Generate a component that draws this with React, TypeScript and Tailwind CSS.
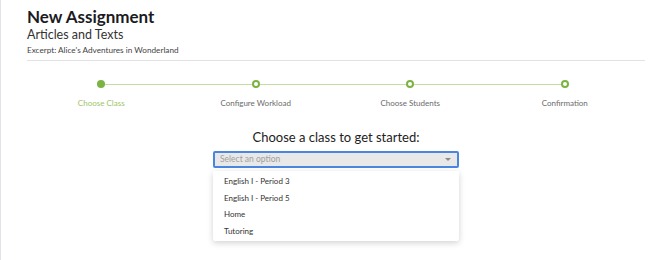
import React from 'react';

const steps = ['Choose Class', 'Configure Workload', 'Choose Students', 'Confirmation'];
const options = ['English I - Period 3', 'English I - Period 5', 'Home', 'Tutoring'];

const Stepper = () => (
  <div className="relative mt-[16px] ml-[-3px] mr-[3px] grid grid-cols-4">
    {/* connecting line between first and last dot */}
    <div className="absolute left-[12.5%] right-[12.5%] top-[7px] h-px bg-[#c5dda4]" />
    {steps.map((s, i) => (
      <div key={s} className="relative flex flex-col items-center">
        {i === 0 ? (
          <div className="h-[8px] w-[8px] mt-[3px] rounded-full bg-[#7cb342]" />
        ) : (
          <div className="h-[8px] w-[8px] mt-[3px] rounded-full border-2 border-[#7cb342] bg-white" />
        )}
        <span className={`mt-[10px] text-[8px] leading-[10px] ${i === 0 ? 'text-[#9bc46a]' : 'text-[#6b6b6b]'}`}>{s}</span>
      </div>
    ))}
  </div>
);

export default function App() {
  return (
    <div className="h-[260px] w-[670px] bg-white border-l border-[#e4e4e8]" style={{ fontFamily: 'Lato, "Noto Sans", sans-serif' }}>
      <div className="pl-[26px] pr-[25px] pt-[6px]">
        <h1 className="text-[17px] font-bold leading-[22px] text-[#1b1b1f]">New Assignment</h1>
        <h2 className="mt-[-1px] text-[12.5px] leading-[16px] text-[#333]">Articles and Texts</h2>
        <p className="mt-[1px] text-[8.2px] leading-[12px] text-[#444]">Excerpt: Alice's Adventures in Wonderland</p>
        <div className="mt-[4px] h-px bg-[#e2e2e2]" />

        <Stepper />

        <div className="mt-[21px] flex flex-col items-center">
          <div className="text-[13px] leading-[16px] text-[#222]">Choose a class to get started:</div>
          <div className="mt-[6px] w-[246px]">
            <div className="flex h-[17px] items-center justify-between rounded-[2px] border-2 border-[#4a86e0] bg-[#e8e8e8] pl-[5px] pr-[6px]">
              <span className="text-[8.5px] text-[#a0a0a0]">Select an option</span>
              <span className="h-0 w-0 border-x-[3px] border-t-[3px] border-x-transparent border-t-[#8a8a8a]" />
            </div>
            <div className="mt-[3px] rounded-[2px] bg-white py-[2px] shadow-[0_2px_6px_rgba(0,0,0,0.18)]">
              {options.map((o) => (
                <div key={o} className="h-[16.5px] pl-[11px] text-[8px] leading-[16.5px] text-[#333]">{o}</div>
              ))}
            </div>
          </div>
        </div>
      </div>
    </div>
  );
}
